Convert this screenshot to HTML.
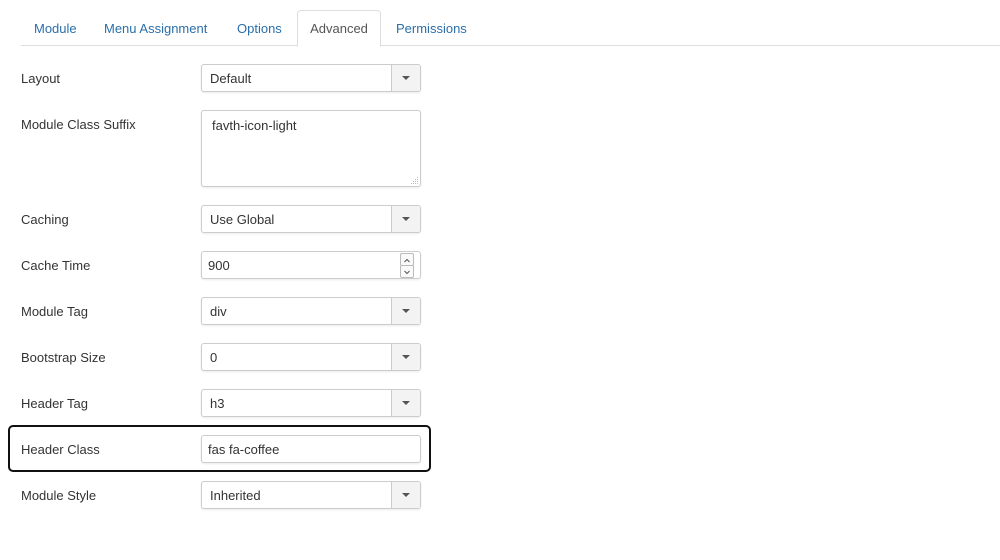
<!DOCTYPE html>
<html><head><style>
body{margin:0;width:1000px;height:560px;background:#fff;font-family:"Liberation Sans",sans-serif;font-size:13px;color:#333;position:relative;overflow:hidden}
.a{position:absolute}
.tabline{left:21px;top:45px;width:979px;height:1px;background:#ddd}
.tab{top:21px;color:#2a6faa;font-size:13px}
.act{left:297px;top:10px;width:82px;height:35px;border:1px solid #ddd;border-bottom:1px solid #fff;border-radius:4px 4px 0 0;background:#fff;color:#555;text-align:center;line-height:35px}
.lbl{left:21px;color:#333}
.box{left:201px;width:218px;height:26px;border:1px solid #ccc;border-radius:3px;background:#fff;box-shadow:0 1px 2px rgba(0,0,0,.08)}
.box span{position:absolute;left:8px;top:6px;color:#333}
.car{position:absolute;right:0;top:0;width:28px;height:26px;border-left:1px solid #ccc;background:#f3f3f3;border-radius:0 3px 3px 0}
.car:after{content:"";position:absolute;left:10px;top:11px;border-left:4px solid transparent;border-right:4px solid transparent;border-top:4px solid #555}
</style></head><body>
<div class="a tabline"></div>
<div class="a tab" style="left:34px">Module</div>
<div class="a tab" style="left:104px">Menu Assignment</div>
<div class="a tab" style="left:237px">Options</div>
<div class="a act">Advanced</div>
<div class="a tab" style="left:396px">Permissions</div>

<div class="a lbl" style="top:71px">Layout</div>
<div class="a box" style="top:64px"><span>Default</span><div class="car"></div></div>

<div class="a lbl" style="top:117px">Module Class Suffix</div>
<div class="a box" style="top:110px;height:75px"><span style="left:10px;top:7px">favth-icon-light</span>
<svg class="a" style="right:1px;bottom:1px" width="8" height="8"><g fill="#bbb"><rect x="6" y="0" width="1" height="1"/><rect x="4" y="2" width="1" height="1"/><rect x="6" y="2" width="1" height="1"/><rect x="2" y="4" width="1" height="1"/><rect x="4" y="4" width="1" height="1"/><rect x="6" y="4" width="1" height="1"/><rect x="0" y="6" width="1" height="1"/><rect x="2" y="6" width="1" height="1"/><rect x="4" y="6" width="1" height="1"/><rect x="6" y="6" width="1" height="1"/></g></svg></div>

<div class="a lbl" style="top:212px">Caching</div>
<div class="a box" style="top:205px"><span>Use Global</span><div class="car"></div></div>

<div class="a lbl" style="top:258px">Cache Time</div>
<div class="a box" style="top:251px"><span style="left:6px">900</span>
<div class="a" style="left:198px;top:1px;width:12px;height:11px;border:1px solid #bbb;border-radius:2px;background:#fafafa"><svg width="12" height="11"><path d="M3.5 7 L6 4.5 L8.5 7" fill="none" stroke="#555" stroke-width="1"/></svg></div>
<div class="a" style="left:198px;top:13px;width:12px;height:11px;border:1px solid #bbb;border-radius:2px;background:#fafafa"><svg width="12" height="11"><path d="M3.5 4 L6 6.5 L8.5 4" fill="none" stroke="#555" stroke-width="1"/></svg></div></div>

<div class="a lbl" style="top:304px">Module Tag</div>
<div class="a box" style="top:297px"><span>div</span><div class="car"></div></div>

<div class="a lbl" style="top:350px">Bootstrap Size</div>
<div class="a box" style="top:343px"><span>0</span><div class="car"></div></div>

<div class="a lbl" style="top:396px">Header Tag</div>
<div class="a box" style="top:389px"><span>h3</span><div class="car"></div></div>

<div class="a" style="left:8px;top:425px;width:419px;height:43px;border:2px solid #111;border-radius:5px"></div>
<div class="a lbl" style="top:442px">Header Class</div>
<div class="a box" style="top:435px"><span style="left:6px">fas fa-coffee</span></div>

<div class="a lbl" style="top:488px">Module Style</div>
<div class="a box" style="top:481px"><span>Inherited</span><div class="car"></div></div>
</body></html>
